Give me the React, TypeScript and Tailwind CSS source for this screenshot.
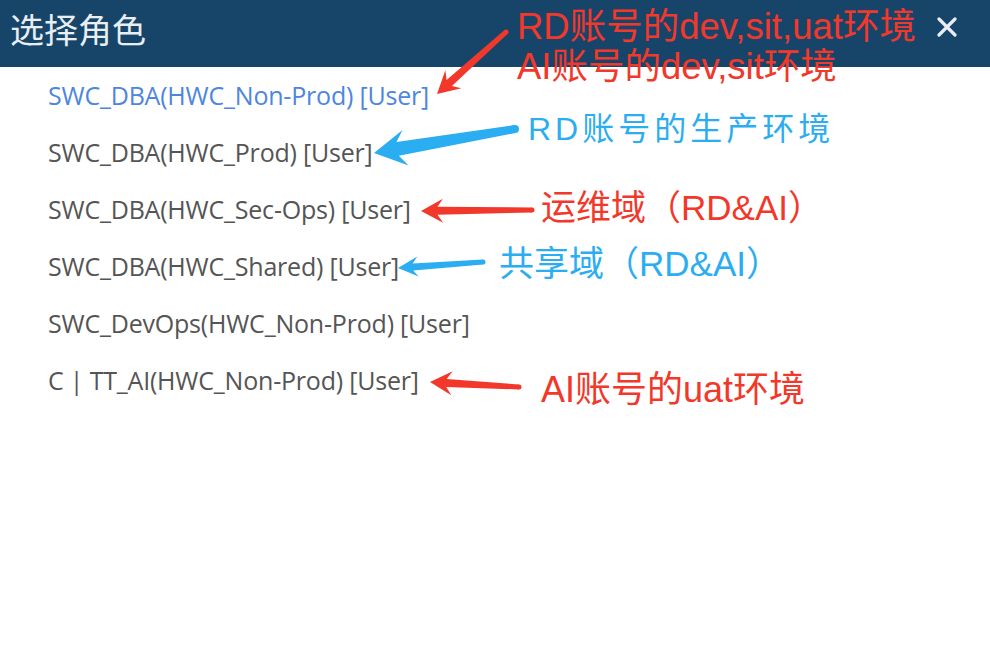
import React from "react";

const roles = [
  { text: "SWC_DBA(HWC_Non-Prod) [User]", active: true },
  { text: "SWC_DBA(HWC_Prod) [User]" },
  { text: "SWC_DBA(HWC_Sec-Ops) [User]" },
  { text: "SWC_DBA(HWC_Shared) [User]" },
  { text: "SWC_DevOps(HWC_Non-Prod) [User]" },
  { text: "C | TT_AI(HWC_Non-Prod) [User]" },
];

const RED = "#f2382a";
const BLUE = "#2badf2";

function Arrow({
  tail,
  tip,
  color,
  head = 22,
  width = 26,
  shaftTail = 5,
  shaftHead = 9,
}: {
  tail: [number, number];
  tip: [number, number];
  color: string;
  head?: number;
  width?: number;
  shaftTail?: number;
  shaftHead?: number;
}) {
  const [x1, y1] = tail;
  const [x2, y2] = tip;
  const dx = x2 - x1;
  const dy = y2 - y1;
  const len = Math.hypot(dx, dy);
  const ux = dx / len;
  const uy = dy / len;
  const px = -uy;
  const py = ux;
  const bx = x2 - ux * head;
  const by = y2 - uy * head;
  const nx = x2 - ux * head * 0.75;
  const ny = y2 - uy * head * 0.75;
  const pts = [
    [x1 + (px * shaftTail) / 2, y1 + (py * shaftTail) / 2],
    [nx + (px * shaftHead) / 2, ny + (py * shaftHead) / 2],
    [bx + (px * width) / 2, by + (py * width) / 2],
    [x2, y2],
    [bx - (px * width) / 2, by - (py * width) / 2],
    [nx - (px * shaftHead) / 2, ny - (py * shaftHead) / 2],
    [x1 - (px * shaftTail) / 2, y1 - (py * shaftTail) / 2],
  ]
    .map((p) => p.join(","))
    .join(" ");
  return (
    <>
      <polygon points={pts} fill={color} />
      <circle cx={x1} cy={y1} r={shaftTail / 2} fill={color} />
    </>
  );
}

const note = "absolute leading-none whitespace-nowrap font-['Liberation_Sans','Noto_Sans_CJK_SC',sans-serif]";

export default function App() {
  return (
    <div className="relative w-[990px] h-[670px] bg-white overflow-hidden">
      <header className="h-[67px] bg-[#17456a] flex items-start justify-between pl-[10px] pr-[33px] pt-[12px]">
        <h1 className="text-[34px] text-[#e9eef2] leading-none font-['Noto_Sans_CJK_SC',sans-serif]">选择角色</h1>
        <svg width="20" height="20" viewBox="0 0 20 20" className="mt-[5px]">
          <path d="M2 2 L18 18 M18 2 L2 18" stroke="#e8eef3" strokeWidth="3.2" strokeLinecap="round" />
        </svg>
      </header>

      <ul className="pl-[48px] font-['Open_Sans',sans-serif]">
        {roles.map((r) => (
          <li
            key={r.text}
            className={`h-[57px] flex items-center text-[25px] tracking-[-0.2px] ${
              r.active ? "text-[#4d86df]" : "text-[#555555]"
            }`}
          >
            {r.text}
          </li>
        ))}
      </ul>

      <svg className="absolute inset-0" width="990" height="670">
        <Arrow tail={[506, 32]} tip={[437, 94]} color={RED} head={22} width={24} shaftTail={5} shaftHead={8} />
        <Arrow tail={[515, 129]} tip={[374, 153]} color={BLUE} head={32} width={36} shaftTail={8} shaftHead={14} />
        <Arrow tail={[532, 210]} tip={[421, 211]} color={RED} head={22} width={24} shaftTail={5} shaftHead={8} />
        <Arrow tail={[483, 262]} tip={[398, 268]} color={BLUE} head={20} width={20} shaftTail={5} shaftHead={7} />
        <Arrow tail={[519, 387]} tip={[430, 382]} color={RED} head={22} width={24} shaftTail={5} shaftHead={8} />
      </svg>

      <div className={`${note} left-[517px] top-[9px] text-[36.5px] text-[#f2382a]`}>RD账号的dev,sit,uat环境</div>
      <div className={`${note} left-[517px] top-[49px] text-[36.5px] text-[#f2382a]`}>AI账号的dev,sit环境</div>
      <div className={`${note} left-[528px] top-[113px] text-[32px] tracking-[4px] text-[#2badf2]`}>RD账号的生产环境</div>
      <div className={`${note} left-[541px] top-[190px] text-[35px] text-[#f2382a]`}>运维域（RD&amp;AI）</div>
      <div className={`${note} left-[499px] top-[246px] text-[35px] text-[#2badf2]`}>共享域（RD&amp;AI）</div>
      <div className={`${note} left-[541px] top-[372px] text-[36px] text-[#f2382a]`}>AI账号的uat环境</div>
    </div>
  );
}
